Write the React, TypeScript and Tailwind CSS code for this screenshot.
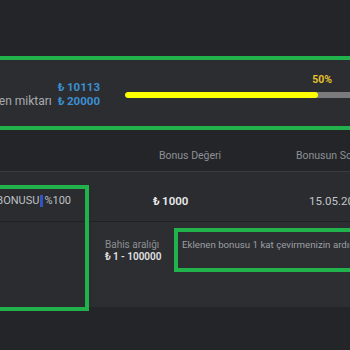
import React from 'react';

const App = () => {
  const progress = 50;

  return (
    <div className="relative w-[350px] h-[350px] overflow-hidden bg-[#232529] font-['Roboto',sans-serif]">
      <div className="h-[56px]" />

      {/* Wagering summary band */}
      <section className="h-[74px] border-y-4 border-[#22b24c] bg-[#2b2d31] flex">
        <div className="w-[100px] shrink-0 pt-[20px] flex flex-col items-end text-[11.5px] leading-[14px] whitespace-nowrap">
          <div className="flex justify-end w-full">
            <span className="font-bold text-[#3c8fd0]">₺&thinsp;10113</span>
          </div>
          <div className="flex justify-end w-full">
            <span className="text-[#a9abaf] text-[12px] mr-[6px]">Çevrilmesi gereken miktarı</span>
            <span className="font-bold text-[#3c8fd0]">₺&thinsp;20000</span>
          </div>
        </div>

        <div className="ml-[25px] w-[386px] shrink-0 pt-[14px]">
          <div className="flex justify-end" style={{ width: `${progress}%` }}>
            <span className="translate-x-[14px] text-[10.5px] leading-[12px] font-bold text-[#e6c02e]">{progress}%</span>
          </div>
          <div className="mt-[6px] h-[6px] rounded-full bg-[#7b7b7d] overflow-hidden">
            <div className="h-full rounded-full bg-[#ffff00]" style={{ width: `${progress}%` }} />
          </div>
        </div>
      </section>

      {/* Table header */}
      <div className="h-[42px] pt-[19px] flex border-b border-[#3a3c41] text-[10.5px] leading-[13px] text-[#8e9095] whitespace-nowrap">
        <div className="w-[159px] shrink-0" />
        <div className="w-[137px] shrink-0">Bonus Değeri</div>
        <div>Bonusun Son Kullanma Tarihi</div>
      </div>

      {/* Bonus row */}
      <div className="h-[50px] pt-[22px] flex bg-[#2a2c30] border-b border-[#1f2124] text-[11.5px] leading-[14px] whitespace-nowrap">
        <div className="w-[153px] shrink-0">
          <div className="w-[71px] flex items-center justify-end text-[#bfc0c3] text-[11px]">
            <span>HOŞGELDİN BONUSU</span>
            <span className="inline-block shrink-0 w-[3px] h-[12px] ml-[1px] mr-[1px] bg-[#2f55c4]" />
            <span>%100</span>
          </div>
        </div>
        <div className="w-[156px] shrink-0 font-semibold text-[#ececec]">₺&thinsp;1000</div>
        <div className="text-[#c4c5c8]">15.05.2024 23:59</div>
      </div>

      {/* Expanded details */}
      <div className="h-[85px] flex bg-[#2c2e32] text-[10px] leading-[12px] whitespace-nowrap">
        <div className="w-[92px] shrink-0 bg-[#2a2c30]" />
        <div className="w-[90px] shrink-0 pl-[13px] pt-[17px]">
          <div className="text-[#8c8e92]">Bahis aralığı</div>
          <div className="font-semibold text-[#e2e2e2]">₺&thinsp;1 - 100000</div>
        </div>
        <div className="pt-[17px] text-[#9c9ea2] text-[9.7px]">
          Eklenen bonusu 1 kat çevirmenizin ardından bonus bakiyeniz ana bakiyenize aktarılır.
        </div>
      </div>

      {/* Highlight boxes */}
      <div className="absolute left-[-4px] top-[185px] w-[93px] h-[126px] border-4 border-[#22b24c]" />
      <div className="absolute left-[174px] top-[228px] w-[190px] h-[44px] border-4 border-[#22b24c]" />
    </div>
  );
};

export default App;
